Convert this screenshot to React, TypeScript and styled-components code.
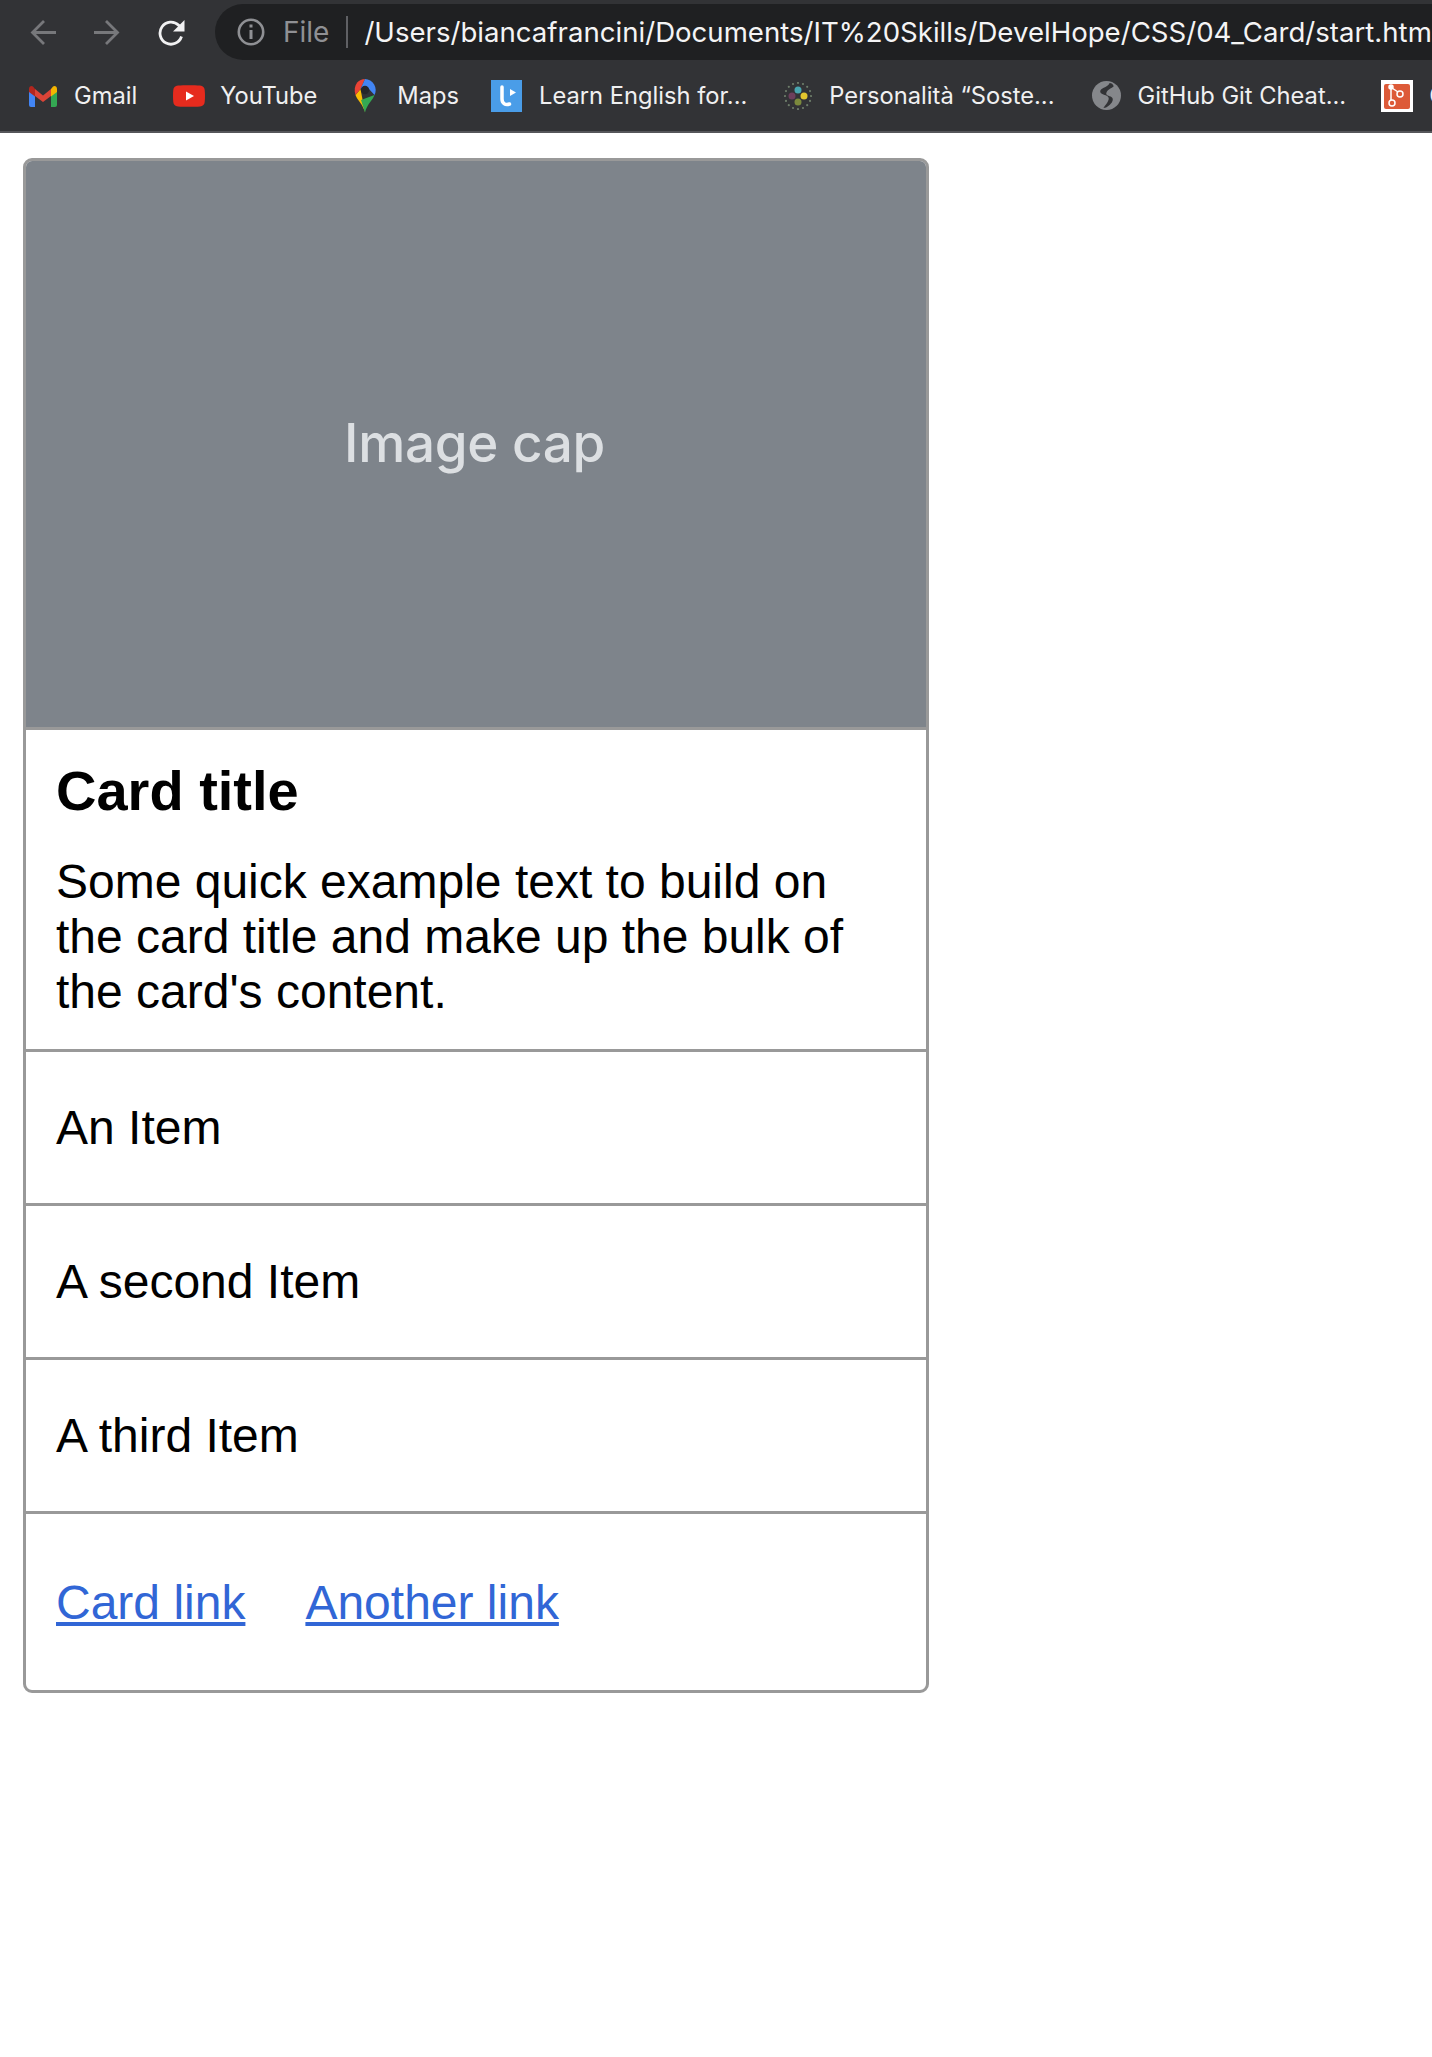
import React from 'react';
import styled, { createGlobalStyle } from 'styled-components';

const GlobalStyle = createGlobalStyle`
  html, body {
    margin: 0;
    padding: 0;
    background: #fff;
  }
  body {
    font-family: "Liberation Sans", Arial, sans-serif;
    color: #000;
  }
`;

const Page = styled.div`
  width: 1432px;
  height: 2057px;
  overflow: hidden;
`;

const Chrome = styled.header`
  height: 133px;
  background: #323336;
  border-bottom: 2px solid #55565a;
  box-sizing: border-box;
  overflow: hidden;
  font-family: "Inter", "Liberation Sans", sans-serif;
`;

const Toolbar = styled.div`
  display: flex;
  align-items: center;
  height: 64px;
  padding-left: 30px;
`;

const NavButton = styled.button<{ $dim?: boolean; $gap: number }>`
  display: flex;
  width: 27px;
  height: 27px;
  margin-right: ${(p) => p.$gap}px;
  padding: 0;
  background: none;
  border: 0;
  color: ${(p) => (p.$dim ? '#77787b' : '#f1f1f2')};
  flex: none;
`;

const Omnibox = styled.div`
  display: flex;
  align-items: center;
  flex: none;
  width: 1300px;
  height: 56px;
  padding-left: 22px;
  background: #1f2022;
  border-radius: 28px 0 0 28px;
  font-size: 28px;
  white-space: nowrap;
`;

const FileLabel = styled.span`
  margin-left: 18px;
  color: #8f9094;
  padding-right: 17px;
  border-right: 2px solid #5f6064;
  line-height: 32px;
`;

const Url = styled.span`
  margin-left: 16px;
  color: #f4f4f5;
  font-size: 27.6px;
`;

const Bookmarks = styled.div`
  display: flex;
  align-items: center;
  height: 63px;
  padding-left: 29px;
  white-space: nowrap;
`;

const Bookmark = styled.span<{ $gap: number; $iconGap: number }>`
  display: flex;
  align-items: center;
  flex: none;
  gap: ${(p) => p.$iconGap}px;
  margin-right: ${(p) => p.$gap}px;
  color: #f0f0f1;
  font-size: 23.7px;
`;

const Card = styled.article`
  box-sizing: border-box;
  width: 906px;
  margin: 25px 0 0 23px;
  border: 3px solid #999;
  border-radius: 9px;
  overflow: hidden;
`;

const ImageCap = styled.div`
  display: flex;
  align-items: center;
  justify-content: center;
  box-sizing: border-box;
  height: 569px;
  padding: 0 3px 2px 0;
  background: #7e848b;
  color: #dcdfe2;
  font-family: "Inter", "Liberation Sans", sans-serif;
  font-size: 53px;
  font-weight: 500;
  letter-spacing: -0.3px;
  border-bottom: 3px solid #999;
`;

const CardBody = styled.div`
  padding: 30px 30px 30px;
  border-bottom: 3px solid #999;
`;

const CardTitle = styled.h5`
  margin: 0 0 32px;
  font-size: 56px;
  line-height: 62px;
  font-weight: 700;
`;

const CardText = styled.p`
  margin: 0;
  font-size: 48px;
  line-height: 55px;
`;

const ListItem = styled.div`
  height: 151px;
  padding: 0 30px;
  display: flex;
  align-items: center;
  font-size: 48px;
  border-bottom: 3px solid #999;
`;

const CardFooter = styled.div`
  display: flex;
  align-items: center;
  gap: 60px;
  height: 176px;
  padding: 0 30px;
`;

const CardLink = styled.a`
  color: #3166d6;
  font-size: 48px;
  text-decoration: underline;
`;

const ArrowIcon = ({ flip }: { flip?: boolean }) => (
  <svg width="26" height="27" viewBox="0 0 26 27" fill="none" stroke="currentColor" strokeWidth="2.8" style={flip ? { transform: 'scaleX(-1)' } : undefined}>
    <path d="M26 13.5H3M14 2 2.5 13.5 14 25" />
  </svg>
);

const ReloadIcon = () => (
  <svg width="27" height="27" viewBox="0 0 27 27" fill="none" stroke="currentColor" strokeWidth="2.8">
    <path d="M23.5 17.5a11 11 0 1 1-2.8-11.2L24 10" />
    <path d="M26.500 1v11.500H15z" fill="currentColor" stroke="none" />
  </svg>
);

const InfoIcon = () => (
  <svg width="28" height="28" viewBox="0 0 28 28" fill="none" stroke="#8f9094" strokeWidth="2.6">
    <circle cx="14" cy="14" r="12.200" />
    <path d="M14 12v9M14 6.500v3" strokeWidth="3" />
  </svg>
);

const GmailIcon = () => (
  <svg width="28" height="22" viewBox="0 0 28 22">
    <path d="M0 5h6v17H2a2 2 0 0 1-2-2z" fill="#4285f4" />
    <path d="M28 5h-6v17h4a2 2 0 0 0 2-2z" fill="#34a853" />
    <path d="M6 4l8 6.500L22 4v7l-8 6-8-6z" fill="#db4437" />
    <path d="M22 4l2-2.500C25.500.400 28 1 28 4v3l-6 4.500z" fill="#f4b400" />
    <path d="M6 4L4 1.500C2.500.400 0 1 0 4v3l6 4.500z" fill="#b3261e" />
  </svg>
);

const YouTubeIcon = () => (
  <svg width="32" height="22" viewBox="0 0 32 22">
    <path d="M5 .600C11 0 21 0 27 .600c3 .300 4.500 2 4.700 4.400.400 4 .400 8 0 12-.200 2.400-1.700 4.100-4.700 4.400-6 .600-16 .600-22 0C2 21.100.500 19.400.300 17c-.400-4-.400-8 0-12C.500 2.600 2 .900 5 .600z" fill="#e62b1e" />
    <path d="M13 6.500l8 4.500-8 4.500z" fill="#fff" />
  </svg>
);

const MapsIcon = () => (
  <svg width="22" height="34" viewBox="0 0 22 34">
    <path d="M11 33.500C9 25 3 21 1.500 16l5-6z" fill="#fbbc04" />
    <path d="M11 33.500c2-8.500 8-12.500 9.500-17.500L7 21z" fill="#34a853" />
    <path d="M3.200 3.500A11 11 0 0 1 11 0l-4.500 10L1.500 16C0 11 .600 7 3.200 3.500z" fill="#ea4335" />
    <path d="M11 0a11 11 0 0 1 9.500 16L15 10l-8.500 0z" fill="#4285f4" />
    <circle cx="11" cy="11" r="4.200" fill="#26262a" />
  </svg>
);

const LearnIcon = () => (
  <svg width="31" height="32" viewBox="0 0 31 32">
    <rect width="31" height="32" fill="#4a9de8" />
    <path d="M11 7v12c0 4 3 6.500 7.500 5" fill="none" stroke="#fff" strokeWidth="3.500" strokeLinecap="round" />
    <path d="M19 9l6 3.500-6 3.500z" fill="#fff" />
  </svg>
);

const DotsIcon = () => {
  const ring = Array.from({ length: 16 }, (_, i) => (i / 16) * Math.PI * 2);
  return (
    <svg width="28" height="28" viewBox="0 0 28 28">
      {ring.map((a) => (
        <circle key={a} cx={14 + 13 * Math.cos(a)} cy={14 + 13 * Math.sin(a)} r="1.100" fill="#6d7d6a" />
      ))}
      <circle cx="14" cy="8" r="3.500" fill="#49a6b0" />
      <circle cx="20" cy="14" r="3.500" fill="#e3c72e" />
      <circle cx="14" cy="20" r="3.500" fill="#7b8a3c" />
      <circle cx="8" cy="14" r="3.500" fill="#6d3f5c" />
    </svg>
  );
};

const GlobeIcon = () => (
  <svg width="29" height="29" viewBox="0 0 28 28">
    <circle cx="14" cy="14" r="14" fill="#85878b" />
    <path d="M17 2c-1 3-5 4-8 6-2 2-1 4 2 5 3 1 6 2 5 5-1 3-3 5-5 8 4 0 6-3 8-5 2-3 1-5-1-6-3-1-5-2-4-4 1-3 5-4 7-6-1-2-2-3-4-3z" fill="#323336" />
  </svg>
);

const HintIcon = () => (
  <svg width="32" height="32" viewBox="0 0 32 32">
    <rect width="32" height="32" fill="#fff" />
    <rect x="3" y="4" width="26" height="25" rx="2" fill="#dd5a38" />
    <g fill="none" stroke="#fff" strokeWidth="1.500">
      <circle cx="10" cy="7" r="2" fill="#fff" />
      <circle cx="19" cy="14" r="3" />
      <circle cx="11" cy="23" r="3" />
      <path d="M11 8l6 4M10 9v11" />
    </g>
  </svg>
);

const App = () => (
  <Page>
    <GlobalStyle />
    <Chrome>
      <Toolbar>
        <NavButton $dim $gap={37} aria-label="Back"><ArrowIcon /></NavButton>
        <NavButton $dim $gap={37} aria-label="Forward"><ArrowIcon flip /></NavButton>
        <NavButton $gap={30} aria-label="Reload"><ReloadIcon /></NavButton>
        <Omnibox>
          <InfoIcon />
          <FileLabel>File</FileLabel>
          <Url>/Users/biancafrancini/Documents/IT%20Skills/DevelHope/CSS/04_Card/start.html</Url>
        </Omnibox>
      </Toolbar>
      <Bookmarks>
        <Bookmark $iconGap={17} $gap={36}><GmailIcon />Gmail</Bookmark>
        <Bookmark $iconGap={15} $gap={37}><YouTubeIcon />YouTube</Bookmark>
        <Bookmark $iconGap={21} $gap={32}><MapsIcon />Maps</Bookmark>
        <Bookmark $iconGap={17} $gap={37}><LearnIcon />Learn English for...</Bookmark>
        <Bookmark $iconGap={17} $gap={37}><DotsIcon />Personalità “Soste...</Bookmark>
        <Bookmark $iconGap={17} $gap={35}><GlobeIcon />GitHub Git Cheat...</Bookmark>
        <Bookmark $iconGap={16} $gap={0}><HintIcon />Git</Bookmark>
      </Bookmarks>
    </Chrome>
    <Card>
      <ImageCap>Image cap</ImageCap>
      <CardBody>
        <CardTitle>Card title</CardTitle>
        <CardText>Some quick example text to build on the card title and make up the bulk of the card's content.</CardText>
      </CardBody>
      <ListItem>An Item</ListItem>
      <ListItem>A second Item</ListItem>
      <ListItem>A third Item</ListItem>
      <CardFooter>
        <CardLink href="#">Card link</CardLink>
        <CardLink href="#">Another link</CardLink>
      </CardFooter>
    </Card>
  </Page>
);

export default App;
